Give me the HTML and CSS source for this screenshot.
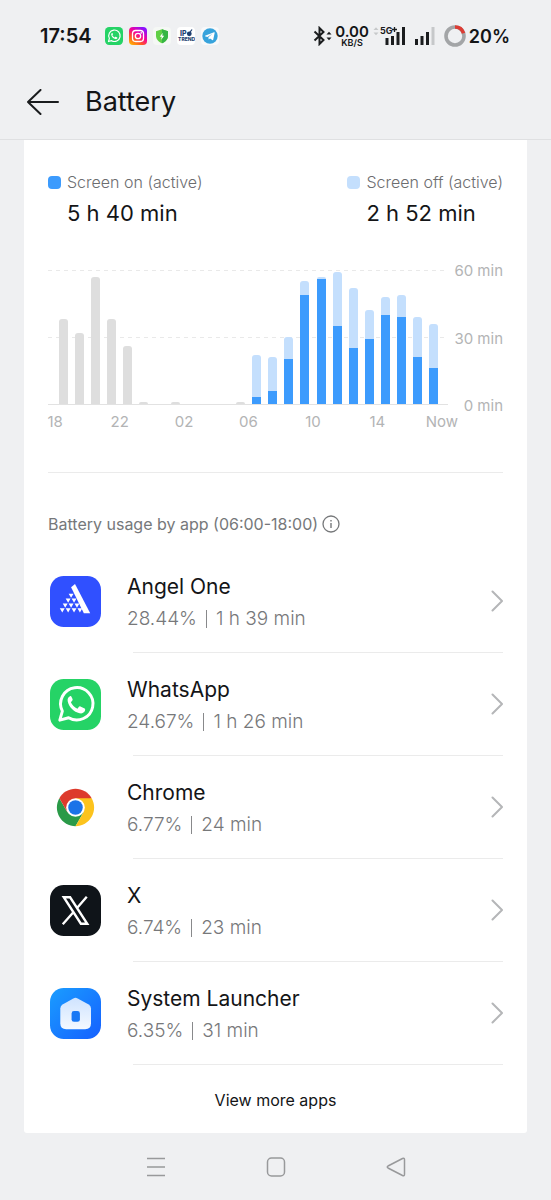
FILE: index.html
```html
<!DOCTYPE html>
<html lang="en">
<head>
    <meta charset="UTF-8">
    <meta name="viewport" content="width=device-width, initial-scale=1.0">
    <title>Battery</title>
    <link rel="stylesheet" href="styles.css">
</head>
<body>

<!-- Status bar -->
<div class="status-bar">
    <span class="clock">17:54</span>
    <div class="notifications">
        <svg width="18" height="18" viewBox="0 0 52 52">
            <rect width="52" height="52" rx="12" fill="#25d366"/>
            <path d="M10 42l2.600-9.300A16.500 16.500 0 1 1 19 39.500z" fill="none" stroke="#fff" stroke-width="3.400" stroke-linejoin="round"/>
            <path d="M20.500 17.500c-2 .8-3 3-2.400 5.400 1.500 6 6.200 10.600 12 12 2.400.6 5-.6 5.600-2.800.3-1 .2-1.700-.4-2l-4.300-2.100c-.6-.3-1.100-.1-1.500.4l-1.500 1.900c-3.300-1.400-5.300-3.500-6.700-6.600l1.500-1.900c.3-.4.400-.9.200-1.400l-1.300-2.500c-.3-.5-.7-.6-1.200-.4z" fill="#fff"/>
        </svg>
        <svg width="18" height="18" viewBox="0 0 18 18">
            <defs>
                <linearGradient id="insta" x1="0" y1="1" x2="0.700" y2="0">
                    <stop offset="0" stop-color="#ffc800"/>
                    <stop offset="0.350" stop-color="#ff5a1f"/>
                    <stop offset="0.650" stop-color="#f5009c"/>
                    <stop offset="1" stop-color="#8a12ff"/>
                </linearGradient>
            </defs>
            <rect width="18" height="18" rx="4" fill="url(#insta)"/>
            <rect x="3.500" y="3.500" width="11" height="11" rx="3.200" fill="none" stroke="#fff" stroke-width="1.300"/>
            <circle cx="9" cy="9" r="2.700" fill="none" stroke="#fff" stroke-width="1.300"/>
            <circle cx="12.200" cy="5.900" r="0.800" fill="#fff"/>
        </svg>
        <svg width="18" height="18" viewBox="0 0 18 18">
            <rect width="18" height="18" rx="4" fill="#f5f8f5"/>
            <path d="M9 2.300l6 2v4.500c0 3.500-2.500 6-6 7.500-3.500-1.500-6-4-6-7.500V4.300z" fill="#5fcf45"/>
            <path d="M9 2.300l6 2v4.500c0 3.500-2.500 6-6 7.500z" fill="#35b544"/>
            <path d="M9.700 5.800L6.800 9.700h1.900l-.5 3 3-4H9.300z" fill="#fff"/>
        </svg>
        <svg width="18" height="18" viewBox="0 0 18 18">
            <rect width="18" height="18" rx="4" fill="#fff"/>
            <text class="tiny-logo" x="3" y="9">IP</text>
            <circle cx="12.300" cy="6.800" r="2.400" fill="#1f3f70"/>
            <path d="M12 6.500l3-4" stroke="#1f3f70" stroke-width="1.200"/>
            <text class="tiny-logo-sub" x="1" y="14">TREND</text>
        </svg>
        <svg width="18" height="18" viewBox="0 0 18 18">
            <rect width="18" height="18" rx="4" fill="#f8f9fa"/>
            <circle cx="9" cy="9" r="7.700" fill="#37a3dc"/>
            <path d="M4 8.800l9-3.600c.5-.2.800.1.700.6l-1.500 7c-.1.500-.5.600-.9.300L9 11.400l-1.300 1.200-.3-2.300 4.300-3.800-5.300 3.400L4 9.300z" fill="#fff"/>
        </svg>
    </div>

    <div class="system">
        <svg width="19" height="20" viewBox="0 0 19 20" fill="none" stroke="#1a1c1e">
            <path d="M1.500 5.500l9 8.500-4 4V2l4 4-9 8.500" stroke-width="2"/>
            <path d="M13.500 8.500L16 5.800l2.500 2.700zM13.500 11.500L16 14.200l2.500-2.700z" fill="#1a1c1e" stroke="none"/>
        </svg>
        <div class="speed">
            <span class="speed-value">0.00</span>
            <span class="speed-unit">KB/S</span>
        </div>
        <svg width="33" height="20" viewBox="0 0 33 20">
            <path d="M.5 4L3 1.200 5.500 4zM.5 6.500L3 9.300l2.500-2.800z" fill="#c6c8ca"/>
            <path d="M14 12v7M19.500 10v9M25 6v13M30.500 1v18" stroke="#1a1c1e" stroke-width="3"/>
            <text class="network" x="7" y="8">5G</text>
            <path d="M19 3.500h5M21.500 1v5" stroke="#1a1c1e" stroke-width="1.300"/>
        </svg>
        <svg class="signal" width="20" height="20" viewBox="0 0 20 20">
            <path d="M1.500 13v6M7 10v9M12.500 6v13" stroke="#1a1c1e" stroke-width="3"/>
            <path d="M18 1v18" stroke="#c6c8ca" stroke-width="3"/>
        </svg>
        <svg class="ring" width="22" height="22" viewBox="0 0 22 22" fill="none" stroke-width="3.600">
            <circle cx="11" cy="11" r="9" stroke="#a3a5a7"/>
            <path d="M11 2a9 9 0 0 1 8.560 6.220" stroke="#dc3c34"/>
        </svg>
        <span class="percent">20%</span>
    </div>
</div>

<!-- Title -->
<header class="title-bar">
    <button class="back" type="button" aria-label="Back">
        <svg width="32" height="26" viewBox="0 0 32 26" fill="none" stroke="#1a1c1e" stroke-width="2" stroke-linecap="round" stroke-linejoin="round">
            <path d="M31 13H1M13.500 1L1 13l12.500 12"/>
        </svg>
    </button>
    <h1>Battery</h1>
</header>

<main class="card">

    <!-- Totals -->
    <div class="totals">
        <div class="total">
            <span class="swatch on"></span>
            <span class="total-label">Screen on (active)</span>
            <strong class="total-value">5 h 40 min</strong>
        </div>
        <div class="total">
            <span class="swatch off"></span>
            <span class="total-label">Screen off (active)</span>
            <strong class="total-value">2 h 52 min</strong>
        </div>
    </div>

    <!-- Hourly chart, values in minutes -->
    <div class="chart">
        <div class="plot">
            <div class="slot"><div class="bar past" style="--past: 38"></div></div>
            <div class="slot"><div class="bar past" style="--past: 32"></div></div>
            <div class="slot"><div class="bar past" style="--past: 57"></div></div>
            <div class="slot"><div class="bar past" style="--past: 38"></div></div>
            <div class="slot"><div class="bar past" style="--past: 26"></div></div>
            <div class="slot"><div class="bar past" style="--past: 1"></div></div>
            <div class="slot"></div>
            <div class="slot"><div class="bar past" style="--past: 1"></div></div>
            <div class="slot"></div>
            <div class="slot"></div>
            <div class="slot"></div>
            <div class="slot"><div class="bar past" style="--past: 1"></div></div>
            <div class="slot"><div class="bar off" style="--off: 19"></div><div class="bar on" style="--on: 3"></div></div>
            <div class="slot"><div class="bar off" style="--off: 15"></div><div class="bar on" style="--on: 6"></div></div>
            <div class="slot"><div class="bar off" style="--off: 10"></div><div class="bar on" style="--on: 20"></div></div>
            <div class="slot"><div class="bar off" style="--off: 6"></div><div class="bar on" style="--on: 49"></div></div>
            <div class="slot"><div class="bar off" style="--off: 1"></div><div class="bar on" style="--on: 56"></div></div>
            <div class="slot"><div class="bar off" style="--off: 24"></div><div class="bar on" style="--on: 35"></div></div>
            <div class="slot"><div class="bar off" style="--off: 27"></div><div class="bar on" style="--on: 25"></div></div>
            <div class="slot"><div class="bar off" style="--off: 13"></div><div class="bar on" style="--on: 29"></div></div>
            <div class="slot"><div class="bar off" style="--off: 8"></div><div class="bar on" style="--on: 40"></div></div>
            <div class="slot"><div class="bar off" style="--off: 10"></div><div class="bar on" style="--on: 39"></div></div>
            <div class="slot"><div class="bar off" style="--off: 18"></div><div class="bar on" style="--on: 21"></div></div>
            <div class="slot"><div class="bar off" style="--off: 20"></div><div class="bar on" style="--on: 16"></div></div>
        </div>
        <div class="y-axis">
            <span>60 min</span>
            <span>30 min</span>
            <span>0 min</span>
        </div>
        <div class="x-axis">
            <span>18</span>
            <span>22</span>
            <span>02</span>
            <span>06</span>
            <span>10</span>
            <span>14</span>
            <span>Now</span>
        </div>
    </div>

    <!-- Usage by app -->
    <section class="usage">
        <h2>Battery usage by app (06:00-18:00)
            <button class="info" type="button" aria-label="Info">
                <svg width="18" height="18" viewBox="0 0 18 18" fill="none" stroke="#76787a">
                    <circle cx="9" cy="9" r="8" stroke-width="1.300"/>
                    <path d="M9 5v1.500M9 8v5" stroke-width="1.400"/>
                </svg>
            </button>
        </h2>

        <ul class="apps">
            <li>
                <a class="app" href="#">
                    <svg class="app-icon" viewBox="0 0 52 52">
                        <rect width="52" height="52" rx="14" fill="#3050ff"/>
                        <path d="M21.500 11.500l4-3.300L41 38h-6.500z" fill="#fff"/>
                        <path d="M19 18h5l-2.500 4.300zM16 23h5l-2.500 4.300zM22 23h5l-2.500 4.300zM13 28h5l-2.500 4.300zM19 28h5l-2.500 4.300zM25 28h5l-2.500 4.300zM10 33h5l-2.500 4.300zM16 33h5l-2.500 4.300zM22 33h5l-2.500 4.300zM28 33h5l-2.500 4.300z" fill="#fff"/>
                    </svg>
                    <span class="app-text">
                        <span class="app-name">Angel One</span>
                        <span class="app-stats">28.44%<i></i>1 h 39 min</span>
                    </span>
                    <svg class="chevron" width="12" height="22" viewBox="0 0 12 22"><path d="M1.500 1.500L11 11l-9.500 9.500"/></svg>
                </a>
            </li>
            <li>
                <a class="app" href="#">
                    <svg class="app-icon" viewBox="0 0 52 52">
                        <rect width="52" height="52" rx="14" fill="#25d366"/>
                        <path d="M10 42l2.600-9.300A16.500 16.500 0 1 1 19 39.500z" fill="none" stroke="#fff" stroke-width="3" stroke-linejoin="round"/>
                        <path d="M20.500 17.500c-2 .8-3 3-2.400 5.400 1.500 6 6.200 10.600 12 12 2.400.6 5-.6 5.600-2.800.3-1 .2-1.700-.4-2l-4.300-2.100c-.6-.3-1.100-.1-1.500.4l-1.500 1.900c-3.300-1.400-5.300-3.500-6.700-6.600l1.500-1.900c.3-.4.400-.9.200-1.400l-1.300-2.500c-.3-.5-.7-.6-1.200-.4z" fill="#fff"/>
                    </svg>
                    <span class="app-text">
                        <span class="app-name">WhatsApp</span>
                        <span class="app-stats">24.67%<i></i>1 h 26 min</span>
                    </span>
                    <svg class="chevron" width="12" height="22" viewBox="0 0 12 22"><path d="M1.500 1.500L11 11l-9.500 9.500"/></svg>
                </a>
            </li>
            <li>
                <a class="app" href="#">
                    <svg class="app-icon" viewBox="0 0 52 52">
                        <path d="M26 26L9.550 16.500A19 19 0 0 1 42.450 16.500z" fill="#dd3a2c"/>
                        <path d="M9.550 16.500A19 19 0 0 0 26 45l8.230-14.250L26 26l-8.230 4.750z" fill="#2a9a48"/>
                        <path d="M42.450 16.500A19 19 0 0 1 26 45l8.230-14.250L26 16.500z" fill="#fcc31d"/>
                        <path d="M9.550 16.500L17.770 30.750 26 26V16.500z" fill="#dd3a2c"/>
                        <circle cx="26" cy="26" r="9.500" fill="#fff"/>
                        <circle cx="26" cy="26" r="7.400" fill="#1a73e8"/>
                    </svg>
                    <span class="app-text">
                        <span class="app-name">Chrome</span>
                        <span class="app-stats">6.77%<i></i>24 min</span>
                    </span>
                    <svg class="chevron" width="12" height="22" viewBox="0 0 12 22"><path d="M1.500 1.500L11 11l-9.500 9.500"/></svg>
                </a>
            </li>
            <li>
                <a class="app" href="#">
                    <svg class="app-icon" viewBox="0 0 52 52">
                        <rect width="52" height="52" rx="14" fill="#0f1419"/>
                        <path d="M14 12.500h6.500L38 39.500h-6.500zM37.500 12L27.800 23.300M13 40l10.800-12.300" fill="none" stroke="#fff" stroke-width="2.400"/>
                    </svg>
                    <span class="app-text">
                        <span class="app-name">X</span>
                        <span class="app-stats">6.74%<i></i>23 min</span>
                    </span>
                    <svg class="chevron" width="12" height="22" viewBox="0 0 12 22"><path d="M1.500 1.500L11 11l-9.500 9.500"/></svg>
                </a>
            </li>
            <li>
                <a class="app" href="#">
                    <svg class="app-icon" viewBox="0 0 52 52">
                        <defs>
                            <linearGradient id="launcher" x1="0" y1="0" x2="1" y2="1">
                                <stop offset="0" stop-color="#1a9dff"/>
                                <stop offset="1" stop-color="#1560ff"/>
                            </linearGradient>
                            <linearGradient id="house" x1="0" y1="0" x2="0" y2="1">
                                <stop offset="0" stop-color="#cfe3ff"/>
                                <stop offset="1" stop-color="#f4f9ff"/>
                            </linearGradient>
                        </defs>
                        <rect width="52" height="52" rx="14" fill="url(#launcher)"/>
                        <path d="M23.800 10.600q2.200-1.200 4.400 0l11.300 6.200q2.300 1.400 2.300 4V36q0 6-6 6H16.500q-6 0-6-6V20.800q0-2.600 2.300-4z" fill="url(#house)"/>
                        <rect x="22" y="23.500" width="8.500" height="11" rx="2.500" fill="#1878f5"/>
                    </svg>
                    <span class="app-text">
                        <span class="app-name">System Launcher</span>
                        <span class="app-stats">6.35%<i></i>31 min</span>
                    </span>
                    <svg class="chevron" width="12" height="22" viewBox="0 0 12 22"><path d="M1.500 1.500L11 11l-9.500 9.500"/></svg>
                </a>
            </li>
        </ul>

        <button class="more" type="button">View more apps</button>
    </section>
</main>

<!-- System navigation -->
<nav class="nav-bar">
    <button type="button" aria-label="Recent apps">
        <svg width="20" height="20" viewBox="0 0 20 20"><path d="M1 1.500h18M1 10h18M1 18.500h18"/></svg>
    </button>
    <button type="button" aria-label="Home">
        <svg width="20" height="20" viewBox="0 0 20 20"><rect x="1.500" y="1" width="17" height="18" rx="4"/></svg>
    </button>
    <button type="button" aria-label="Back">
        <svg width="20" height="20" viewBox="0 0 20 20"><path d="M2 9L16.500 1.500q2-.8 2 1.200v14.600q0 2-2 1.200L2 11q-1.500-1 0-2z"/></svg>
    </button>
</nav>

</body>
</html>
```
FILE: styles.css
```css
* {
    box-sizing: border-box;
}
body {
    margin: 0;
    min-height: 100vh;
    display: flex;
    flex-direction: column;
    background: #eff0f2;
    color: #141517;
    font-family: Inter, Roboto, sans-serif;
}
button {
    padding: 0;
    border: none;
    background: none;
    color: inherit;
    font-family: inherit;
    cursor: pointer;
}
svg {
    display: block;
    flex: none;
}

/* Status bar */
.status-bar {
    display: flex;
    align-items: center;
    height: 72px;
    padding: 0 41px 0 40px;
}
.clock {
    font-size: 20px;
    font-weight: 600;
}
.notifications {
    display: flex;
    gap: 6px;
    margin-left: 13px;
}
.tiny-logo {
    font-size: 7px;
    font-weight: 800;
    fill: #1f3f70;
}
.tiny-logo-sub {
    font-size: 5px;
    font-weight: 800;
    fill: #1f3f70;
}
.system {
    display: flex;
    align-items: center;
    margin-left: auto;
}
.speed {
    display: flex;
    flex-direction: column;
    align-items: center;
    margin: 0 4px 0 3px;
    font-weight: 600;
}
.speed-value {
    font-size: 15px;
    line-height: 12px;
}
.speed-unit {
    font-size: 9px;
    line-height: 9px;
}
.network {
    font-size: 9px;
    font-weight: 700;
    fill: #1a1c1e;
}
.signal {
    margin-left: 9px;
}
.ring {
    margin: 0 3px 0 9px;
}
.percent {
    font-size: 18px;
    font-weight: 600;
}

/* Title */
.title-bar {
    display: flex;
    align-items: center;
    gap: 26px;
    height: 68px;
    padding: 0 27px 8px;
    border-bottom: 1px solid #dfe0e2;
}
.title-bar h1 {
    margin: 0;
    font-size: 27px;
    line-height: 34px;
    font-weight: 400;
}

/* Card */
.card {
    margin: 0 24px;
    padding: 32px 24px 0;
    background: #fff;
    border-radius: 0 0 3px 3px;
}
.totals {
    display: flex;
    justify-content: space-between;
}
.total {
    display: grid;
    grid-template-columns: 13px auto;
    column-gap: 6px;
    align-items: center;
}
.swatch {
    height: 13px;
    border-radius: 4px;
}
.swatch.on {
    background: #3c9bfd;
}
.swatch.off {
    background: #c4dffd;
}
.total-label {
    font-size: 16px;
    line-height: 20px;
    font-weight: 300;
    color: #6c6d6f;
}
.total-value {
    grid-column: 2;
    font-size: 22px;
    line-height: 42px;
    font-weight: 400;
}

/* Chart */
.chart {
    display: grid;
    grid-template-columns: 1fr 55px;
    margin-top: 36px;
}
.plot {
    display: flex;
    height: 135px;
    padding: 0 6px 0 7px;
    border-bottom: 1px solid #e2e2e2;
    background:
        repeating-linear-gradient(90deg, #e9e9e9 0 4px, transparent 4px 8px) 0 0 / 100% 1px no-repeat,
        repeating-linear-gradient(90deg, #e9e9e9 0 4px, transparent 4px 8px) 0 50% / 100% 1px no-repeat;
}
.slot {
    flex: 1;
    display: flex;
    flex-direction: column;
    justify-content: flex-end;
    align-items: center;
}
.bar {
    width: 9px;
}
.bar.past {
    height: calc(var(--past) / 60 * 100%);
    background: #dedede;
    border-radius: 3px 3px 0 0;
}
.bar.off {
    height: calc(var(--off) / 60 * 100%);
    background: #c4dffd;
    border-radius: 3px 3px 0 0;
}
.bar.on {
    height: calc(var(--on) / 60 * 100%);
    background: #3c9bfd;
}
.y-axis {
    display: flex;
    flex-direction: column;
    justify-content: space-between;
    margin: -9px 0 -11px;
    text-align: right;
    white-space: nowrap;
}
.y-axis span, .x-axis span {
    font-size: 15px;
    line-height: 20px;
    color: #b3b4b5;
}
.x-axis {
    display: grid;
    grid-template-columns: repeat(7, 1fr);
    margin: 7px -26px 0 -25px;
    text-align: center;
}

/* Usage by app */
.usage {
    margin-top: 40px;
    border-top: 1px solid #ebebeb;
}
.usage h2 {
    display: flex;
    align-items: center;
    gap: 4px;
    margin: 40px 0 15px;
    font-size: 16px;
    line-height: 22px;
    font-weight: 400;
    color: #76787a;
}
.apps {
    margin: 0;
    padding: 0;
    list-style: none;
}
.apps li::after {
    content: "";
    display: block;
    height: 1px;
    margin-left: 85px;
    background: #ebebeb;
}
.app {
    display: flex;
    align-items: center;
    height: 102px;
    padding-left: 2px;
    color: inherit;
    text-decoration: none;
}
.app-icon {
    width: 51px;
    height: 51px;
}
.app-text {
    flex: 1;
    display: flex;
    flex-direction: column;
    margin-left: 26px;
    padding-top: 4px;
}
.app-name {
    font-size: 21px;
    line-height: 32px;
}
.app-stats {
    display: flex;
    align-items: center;
    font-size: 19px;
    line-height: 32px;
    font-weight: 300;
    color: #77787a;
}
.app-stats i {
    width: 1px;
    height: 18px;
    margin: 0 9px;
    background: #88898b;
}
.chevron {
    fill: none;
    stroke: #b5b6b8;
    stroke-width: 2;
    stroke-linecap: round;
    stroke-linejoin: round;
}
.more {
    display: block;
    width: 100%;
    height: 68px;
    padding-top: 2px;
    font-size: 16px;
}

/* System navigation */
.nav-bar {
    flex: 1;
    display: flex;
    justify-content: center;
    align-items: center;
    gap: 100px;
    min-height: 60px;
}
.nav-bar svg {
    fill: none;
    stroke: #98999b;
    stroke-width: 1.500;
}
```
